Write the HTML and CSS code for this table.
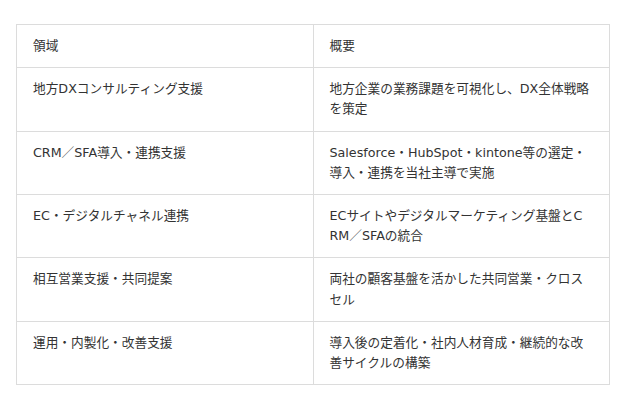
FILE: index.html
```html
<!DOCTYPE html>
<html lang="ja">
<head>
<meta charset="utf-8">
<link rel="stylesheet" href="styles.css">
</head>
<body>
<table class="grid">
  <thead>
    <tr><th>領域</th><th>概要</th></tr>
  </thead>
  <tbody>
    <tr><td>地方DXコンサルティング支援</td><td>地方企業の業務課題を可視化し、DX全体戦略を策定</td></tr>
    <tr><td>CRM／SFA導入・連携支援</td><td>Salesforce・HubSpot・kintone等の選定・導入・連携を当社主導で実施</td></tr>
    <tr><td>EC・デジタルチャネル連携</td><td>ECサイトやデジタルマーケティング基盤とC<br>RM／SFAの統合</td></tr>
    <tr><td>相互営業支援・共同提案</td><td>両社の顧客基盤を活かした共同営業・クロスセル</td></tr>
    <tr><td>運用・内製化・改善支援</td><td>導入後の定着化・社内人材育成・継続的な改善サイクルの構築</td></tr>
  </tbody>
</table>
</body>
</html>
```

FILE: styles.css
```css
html, body {
  margin: 0;
  padding: 0;
  background: #ffffff;
}
body {
  padding: 24px 16px;
  font-family: "DejaVu Sans", "Noto Sans CJK JP", sans-serif;
  font-size: 12.7px;
  line-height: 20.2px;
  color: #333333;
}
.grid {
  width: 594px;
  border-collapse: collapse;
  table-layout: fixed;
}
.grid th,
.grid td {
  width: 50%;
  border: 1px solid #dcdcdc;
  padding: 11px 17px 11px 16px;
  text-align: left;
  vertical-align: top;
  font-weight: normal;
  word-break: break-all;
}
```
